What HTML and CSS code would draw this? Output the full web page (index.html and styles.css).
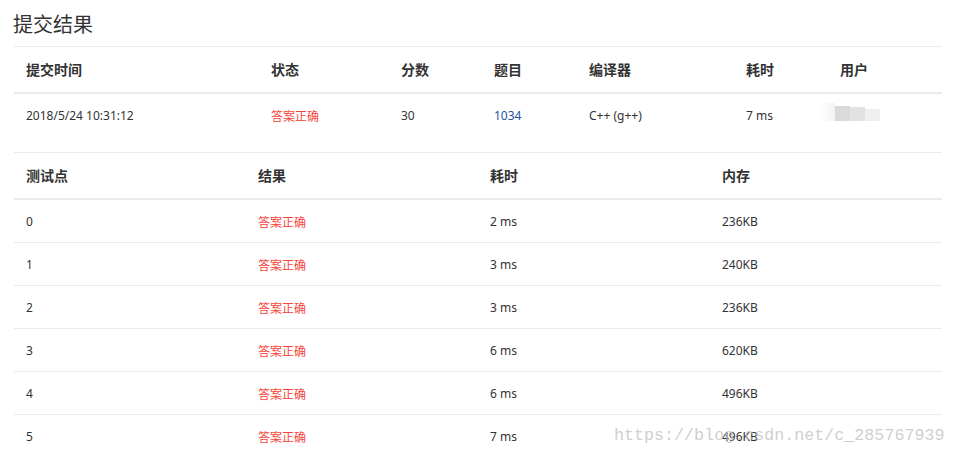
FILE: index.html
```html
<!DOCTYPE html>
<html lang="zh-CN">
<head>
<meta charset="utf-8">
<title>提交结果</title>
<link rel="stylesheet" href="styles.css">
</head>
<body>
<div class="page">
  <h1 class="title">提交结果</h1>
  <table class="grid grid-summary">
    <colgroup>
      <col class="c-time"><col class="c-status"><col class="c-score"><col class="c-problem"><col class="c-compiler"><col class="c-cost"><col class="c-user">
    </colgroup>
    <thead>
      <tr><th>提交时间</th><th>状态</th><th>分数</th><th>题目</th><th>编译器</th><th>耗时</th><th>用户</th></tr>
    </thead>
    <tbody>
      <tr class="summary-row">
        <td>2018/5/24 10:31:12</td>
        <td class="ok">答案正确</td>
        <td>30</td>
        <td><a class="link" href="#">1034</a></td>
        <td>C++ (g++)</td>
        <td>7 ms</td>
        <td class="user-cell">
          <svg class="avatar" width="62" height="22" viewBox="0 0 62 22">
            <defs>
              <linearGradient id="fade" x1="0" x2="1" y1="0" y2="0">
                <stop offset="0" stop-color="#ffffff"/>
                <stop offset="1" stop-color="#f3f3f3"/>
              </linearGradient>
            </defs>
            <path d="M0 19 L3 1 L15 1 L15 19 Z" fill="url(#fade)"/>
            <rect x="15" y="4" width="15" height="15" fill="#dadada"/>
            <rect x="30" y="5" width="15" height="14" fill="#e2e2e2"/>
            <rect x="45" y="7" width="15" height="12" fill="#efefef"/>
          </svg>
        </td>
      </tr>
    </tbody>
  </table>
  <table class="grid grid-cases">
    <colgroup><col class="c-q"><col class="c-q"><col class="c-q"><col class="c-q"></colgroup>
    <thead>
      <tr><th>测试点</th><th>结果</th><th>耗时</th><th>内存</th></tr>
    </thead>
    <tbody>
      <tr><td>0</td><td class="ok">答案正确</td><td>2 ms</td><td>236KB</td></tr>
      <tr><td>1</td><td class="ok">答案正确</td><td>3 ms</td><td>240KB</td></tr>
      <tr><td>2</td><td class="ok">答案正确</td><td>3 ms</td><td>236KB</td></tr>
      <tr><td>3</td><td class="ok">答案正确</td><td>6 ms</td><td>620KB</td></tr>
      <tr><td>4</td><td class="ok">答案正确</td><td>6 ms</td><td>496KB</td></tr>
      <tr><td>5</td><td class="ok">答案正确</td><td>7 ms</td><td>496KB</td></tr>
    </tbody>
  </table>
</div>
<div class="watermark">https://blog.csdn.net/c_285767939</div>
</body>
</html>
```
FILE: styles.css
```css
html, body {
  margin: 0;
  padding: 0;
  background: #fff;
  height: 457px;
  overflow: hidden;
}
body {
  font-family: "Noto Sans", "Noto Sans CJK SC", sans-serif;
  color: #333;
  position: relative;
}
.page {
  padding: 0 14px;
}
.title {
  margin: 10px 0 8px -1px;
  font-size: 20px;
  line-height: 28px;
  font-weight: normal;
  color: #333;
  font-family: "Noto Sans CJK SC", sans-serif;
}
.grid {
  width: 928px;
  table-layout: fixed;
  border-collapse: separate;
  border-spacing: 0;
}
.grid-summary {
  border-top: 1px solid #eaeaea;
}
.grid th {
  text-align: left;
  font-family: "Noto Sans CJK SC", sans-serif;
  font-size: 14px;
  font-weight: bold;
  line-height: 20px;
  padding: 12px 12px 13px;
  border-bottom: 2px solid #eaeaea;
  color: #333;
}
.grid td {
  font-size: 12px;
  line-height: 18px;
  padding: 13px 12px 11px;
  border-bottom: 1px solid #ebebeb;
  vertical-align: top;
  white-space: nowrap;
}
.summary-row td {
  padding-top: 13px;
  padding-bottom: 12px;
  height: 33px;
}
.user-cell {
  padding-left: 0 !important;
}
.avatar {
  display: block;
  margin-left: -8px;
  margin-top: -5px;
}
.c-time { width: 245px; }
.c-status { width: 130px; }
.c-score { width: 93px; }
.c-problem { width: 95px; }
.c-compiler { width: 157px; }
.c-cost { width: 94px; }
.c-user { width: 114px; }
.c-q { width: 232px; }
.ok {
  color: #f5453b;
  font-family: "Noto Sans CJK SC", sans-serif;
}
.link {
  color: #24549f;
  text-decoration: none;
}
.watermark {
  position: absolute;
  left: 614px;
  top: 425px;
  font-family: "Liberation Mono", monospace;
  font-size: 16.7px;
  line-height: 22px;
  color: rgba(190, 190, 190, 0.75);
  white-space: nowrap;
}
```
